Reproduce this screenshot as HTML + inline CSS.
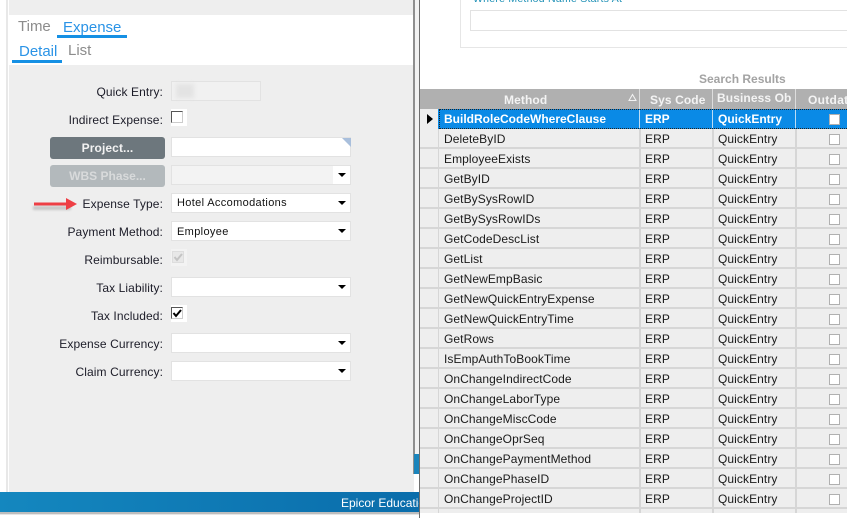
<!DOCTYPE html>
<html><head><meta charset="utf-8">
<style>
html,body{margin:0;padding:0;background:#fff}
#p{position:relative;width:847px;height:518px;overflow:hidden;background:#fff;font-family:"Liberation Sans",sans-serif;font-size:12px;color:#1a1a1a}
#p div{position:absolute;box-sizing:border-box}
.l{right:684px;text-align:right;white-space:nowrap;font-size:12px;line-height:14px;letter-spacing:.1px;color:#1c1c28;margin-top:1px}
.f{left:171px;width:180px;height:20px;background:#fff;border:1px solid #e2e2e2}
.f .a{right:4px;top:7px;width:0;height:0;border-left:4px solid transparent;border-right:4px solid transparent;border-top:4px solid #000}
.v{left:5px;top:2px;font-size:11px;line-height:14px;letter-spacing:.35px;color:#111;white-space:nowrap}
.hc{top:89px;height:20px;color:#f4f4f4;font-weight:bold;font-size:12px;line-height:20px;white-space:nowrap;letter-spacing:.1px}
.r{left:420px;width:427px;height:20px;background:#eee;border-bottom:2px solid #d6d6d6;line-height:19px;font-size:12px;white-space:nowrap;color:#1a1a1a}
.r .t{top:1px;white-space:nowrap;letter-spacing:.08px}
.r .cb{left:409px;top:5px;width:11px;height:11px;background:#fff;border:1px solid #b0b0b0}
.r .s{top:0;width:2px;height:20px;background:#d6d6d6}
.r .s0{left:18px;width:1px;background:#d6d6d6}
</style></head><body><div id="p">

<!-- left window -->
<div style="left:6px;top:0;width:2px;height:492px;background:#e8e8e8"></div>
<div style="left:9px;top:0;width:405px;height:492px;background:#eee"></div>
<div style="left:9px;top:15px;width:405px;height:50px;background:#fff"></div>
<div style="left:18px;top:18px;font-size:15px;line-height:18px;color:#8c8c8c;white-space:nowrap">Time</div>
<div style="left:63px;top:19px;font-size:15px;line-height:18px;color:#2a93e6;white-space:nowrap">Expense</div>
<div style="left:57px;top:35px;width:70px;height:3px;background:#1590e4"></div>
<div style="left:19px;top:43px;font-size:15px;line-height:18px;color:#2a93e6;white-space:nowrap">Detail</div>
<div style="left:68px;top:42px;font-size:15px;line-height:18px;color:#8c8c8c;white-space:nowrap">List</div>
<div style="left:12px;top:60px;width:50px;height:3px;background:#1590e4"></div>

<div class="l" style="top:84px">Quick Entry:</div>
<div style="left:171px;top:81px;width:90px;height:20px;background:#f1f1f1;border:1px solid #e2e2e2"></div>
<div style="left:176px;top:84px;width:18px;height:14px;background:#e3e3e3;filter:blur(2px)"></div>

<div class="l" style="top:112px">Indirect Expense:</div>
<div style="left:171px;top:109px;width:16px;height:17px;background:#fff"></div>
<div style="left:171px;top:111px;width:12px;height:12px;background:#fff;border:1px solid #555;border-right-color:#ccc;border-bottom-color:#ccc"></div>

<div style="left:50px;top:137px;width:115px;height:22px;background:#6d777d;border-radius:3px;color:#f2f2f2;font-weight:bold;font-size:12px;line-height:23px;text-align:center;letter-spacing:.1px">Project...</div>
<div class="f" style="top:137px"></div>
<div style="left:342px;top:138px;width:0;height:0;border-top:9px solid #a9bfdc;border-left:9px solid transparent"></div>

<div style="left:50px;top:165px;width:115px;height:22px;background:#b3b9bc;border-radius:3px;color:#d8dadb;font-weight:bold;font-size:12px;line-height:23px;text-align:center">WBS Phase...</div>
<div class="f" style="top:165px;background:#f3f3f3"><div style="right:0;top:0;width:17px;height:18px;background:#fff"></div><div class="a"></div></div>

<svg style="position:absolute;left:30px;top:195px" width="50" height="20"><rect x="3" y="11" width="38" height="4" fill="#999" opacity=".45" style="filter:blur(1px)"/><path d="M4 7.5H36V3L47 9L36 15V10.5H4Z" fill="#ee3f45"/></svg>
<div class="l" style="top:196px">Expense Type:</div>
<div class="f" style="top:193px"><div class="v">Hotel Accomodations</div><div class="a"></div></div>
<div class="l" style="top:224px">Payment Method:</div>
<div class="f" style="top:221px"><div class="v" style="top:3px">Employee</div><div class="a"></div></div>

<div class="l" style="top:252px">Reimbursable:</div>
<div style="left:171px;top:249px;width:16px;height:17px;background:#f3f3f3"></div>
<div style="left:172px;top:251px;width:12px;height:12px;background:#e8e8e8;border:1px solid #ddd"></div>
<svg style="position:absolute;left:172px;top:251px" width="12" height="12"><path d="M2.5 6L5 9L10 3" fill="none" stroke="#c4c4c4" stroke-width="2"/></svg>

<div class="l" style="top:280px">Tax Liability:</div>
<div class="f" style="top:277px"><div class="a"></div></div>

<div class="l" style="top:308px">Tax Included:</div>
<div style="left:171px;top:305px;width:16px;height:17px;background:#fff"></div>
<div style="left:171px;top:307px;width:12px;height:12px;background:#fff;border:1px solid #555;border-right-color:#ccc;border-bottom-color:#ccc"></div>
<svg style="position:absolute;left:171px;top:307px" width="12" height="12"><path d="M2.5 6L5 9L10 3" fill="none" stroke="#000" stroke-width="2"/></svg>

<div class="l" style="top:336px">Expense Currency:</div>
<div class="f" style="top:333px"><div class="a"></div></div>
<div class="l" style="top:364px">Claim Currency:</div>
<div class="f" style="top:361px"><div class="a"></div></div>

<!-- blue status bar -->
<div style="left:0;top:492px;width:420px;height:20px;background:linear-gradient(90deg,#1487bf,#0a6dab);color:#fff;font-size:12px;line-height:20px;overflow:hidden"><div style="left:341px;top:1px;white-space:nowrap">Epicor Education</div></div>
<div style="left:0;top:512px;width:420px;height:2px;background:#bdbdbd"></div>
<div style="left:0;top:514px;width:420px;height:1px;background:#e6e6e6"></div>

<!-- middle window edge -->
<div style="left:413px;top:0;width:2px;height:474px;background:#8f8f8f"></div>
<div style="left:415px;top:0;width:4px;height:474px;background:#f2f2f2"></div>
<div style="left:414px;top:454px;width:6px;height:20px;background:#1a84bb"></div>
<div style="left:419px;top:0;width:1px;height:518px;background:#6e6e6e"></div>

<!-- right window -->
<div style="left:460px;top:0;width:387px;height:48px;border:1px solid #e6e6e6;border-top:0;border-right:0"></div>
<div style="left:473px;top:-7px;font-size:10.5px;line-height:12px;color:#1c8fb5;white-space:nowrap;letter-spacing:.25px">Where Method Name Starts At</div>
<div style="left:470px;top:10px;width:377px;height:21px;border:1px solid #e2e2e2;border-right:0"></div>
<div style="left:699px;top:72px;font-size:12px;font-weight:bold;line-height:14px;color:#a3a3a3;white-space:nowrap">Search Results</div>

<div style="left:420px;top:89px;width:427px;height:20px;background:#b0b0b0"></div>
<div style="left:639px;top:89px;width:1px;height:20px;background:#ddd"></div>
<div style="left:712px;top:89px;width:1px;height:20px;background:#ddd"></div>
<div style="left:795px;top:89px;width:1px;height:20px;background:#ddd"></div>
<div class="hc" style="left:504px;top:90px">Method</div>
<svg style="position:absolute;left:628px;top:93px" width="10" height="9"><path d="M1 7.5H8L4.5 1.5Z" fill="none" stroke="#f4f4f4"/></svg>
<div class="hc" style="left:650px;top:90px">Sys Code</div>
<div class="hc" style="left:717px;top:88px">Business Ob</div>
<div class="hc" style="left:808px;top:90px;letter-spacing:.3px">Outdated</div>

<div class="r" style="top:109px;background:#0a8ae6;border-bottom:0"></div>
<div style="left:420px;top:109px;width:18px;height:20px;background:#eee"></div>
<div style="left:427px;top:114px;width:0;height:0;border-left:6px solid #000;border-top:5px solid transparent;border-bottom:5px solid transparent"></div>
<div style="left:439px;top:109px;width:408px;height:20px;border-top:1px dotted #222;border-bottom:1px dotted #222;border-left:1px dotted #222"></div>
<div style="left:639px;top:110px;width:1px;height:18px;background:#bcdcf4"></div>
<div style="left:712px;top:110px;width:1px;height:18px;background:#bcdcf4"></div>
<div style="left:795px;top:110px;width:1px;height:18px;background:#bcdcf4"></div>
<div style="left:444px;top:112px;color:#fff;font-weight:bold;font-size:12px;line-height:14px;white-space:nowrap">BuildRoleCodeWhereClause</div>
<div style="left:645px;top:112px;color:#fff;font-weight:bold;font-size:12px;line-height:14px">ERP</div>
<div style="left:718px;top:112px;color:#fff;font-weight:bold;font-size:12px;line-height:14px">QuickEntry</div>
<div style="left:829px;top:114px;width:11px;height:11px;background:#fff;border:1px solid #b0b0b0"></div>
<div style="left:420px;top:129px;width:427px;height:2px;background:#d6d6d6"></div>

<div class="r" style="top:129px"><div class="s s0"></div><div class="s" style="left:219px"></div><div class="s" style="left:292px"></div><div class="s" style="left:375px"></div><div class="t" style="left:24px">DeleteByID</div><div class="t" style="left:225px">ERP</div><div class="t" style="left:298px">QuickEntry</div><div class="cb"></div></div>
<div class="r" style="top:149px"><div class="s s0"></div><div class="s" style="left:219px"></div><div class="s" style="left:292px"></div><div class="s" style="left:375px"></div><div class="t" style="left:24px">EmployeeExists</div><div class="t" style="left:225px">ERP</div><div class="t" style="left:298px">QuickEntry</div><div class="cb"></div></div>
<div class="r" style="top:169px"><div class="s s0"></div><div class="s" style="left:219px"></div><div class="s" style="left:292px"></div><div class="s" style="left:375px"></div><div class="t" style="left:24px">GetByID</div><div class="t" style="left:225px">ERP</div><div class="t" style="left:298px">QuickEntry</div><div class="cb"></div></div>
<div class="r" style="top:189px"><div class="s s0"></div><div class="s" style="left:219px"></div><div class="s" style="left:292px"></div><div class="s" style="left:375px"></div><div class="t" style="left:24px">GetBySysRowID</div><div class="t" style="left:225px">ERP</div><div class="t" style="left:298px">QuickEntry</div><div class="cb"></div></div>
<div class="r" style="top:209px"><div class="s s0"></div><div class="s" style="left:219px"></div><div class="s" style="left:292px"></div><div class="s" style="left:375px"></div><div class="t" style="left:24px">GetBySysRowIDs</div><div class="t" style="left:225px">ERP</div><div class="t" style="left:298px">QuickEntry</div><div class="cb"></div></div>
<div class="r" style="top:229px"><div class="s s0"></div><div class="s" style="left:219px"></div><div class="s" style="left:292px"></div><div class="s" style="left:375px"></div><div class="t" style="left:24px">GetCodeDescList</div><div class="t" style="left:225px">ERP</div><div class="t" style="left:298px">QuickEntry</div><div class="cb"></div></div>
<div class="r" style="top:249px"><div class="s s0"></div><div class="s" style="left:219px"></div><div class="s" style="left:292px"></div><div class="s" style="left:375px"></div><div class="t" style="left:24px">GetList</div><div class="t" style="left:225px">ERP</div><div class="t" style="left:298px">QuickEntry</div><div class="cb"></div></div>
<div class="r" style="top:269px"><div class="s s0"></div><div class="s" style="left:219px"></div><div class="s" style="left:292px"></div><div class="s" style="left:375px"></div><div class="t" style="left:24px">GetNewEmpBasic</div><div class="t" style="left:225px">ERP</div><div class="t" style="left:298px">QuickEntry</div><div class="cb"></div></div>
<div class="r" style="top:289px"><div class="s s0"></div><div class="s" style="left:219px"></div><div class="s" style="left:292px"></div><div class="s" style="left:375px"></div><div class="t" style="left:24px">GetNewQuickEntryExpense</div><div class="t" style="left:225px">ERP</div><div class="t" style="left:298px">QuickEntry</div><div class="cb"></div></div>
<div class="r" style="top:309px"><div class="s s0"></div><div class="s" style="left:219px"></div><div class="s" style="left:292px"></div><div class="s" style="left:375px"></div><div class="t" style="left:24px">GetNewQuickEntryTime</div><div class="t" style="left:225px">ERP</div><div class="t" style="left:298px">QuickEntry</div><div class="cb"></div></div>
<div class="r" style="top:329px"><div class="s s0"></div><div class="s" style="left:219px"></div><div class="s" style="left:292px"></div><div class="s" style="left:375px"></div><div class="t" style="left:24px">GetRows</div><div class="t" style="left:225px">ERP</div><div class="t" style="left:298px">QuickEntry</div><div class="cb"></div></div>
<div class="r" style="top:349px"><div class="s s0"></div><div class="s" style="left:219px"></div><div class="s" style="left:292px"></div><div class="s" style="left:375px"></div><div class="t" style="left:24px">IsEmpAuthToBookTime</div><div class="t" style="left:225px">ERP</div><div class="t" style="left:298px">QuickEntry</div><div class="cb"></div></div>
<div class="r" style="top:369px"><div class="s s0"></div><div class="s" style="left:219px"></div><div class="s" style="left:292px"></div><div class="s" style="left:375px"></div><div class="t" style="left:24px">OnChangeIndirectCode</div><div class="t" style="left:225px">ERP</div><div class="t" style="left:298px">QuickEntry</div><div class="cb"></div></div>
<div class="r" style="top:389px"><div class="s s0"></div><div class="s" style="left:219px"></div><div class="s" style="left:292px"></div><div class="s" style="left:375px"></div><div class="t" style="left:24px">OnChangeLaborType</div><div class="t" style="left:225px">ERP</div><div class="t" style="left:298px">QuickEntry</div><div class="cb"></div></div>
<div class="r" style="top:409px"><div class="s s0"></div><div class="s" style="left:219px"></div><div class="s" style="left:292px"></div><div class="s" style="left:375px"></div><div class="t" style="left:24px">OnChangeMiscCode</div><div class="t" style="left:225px">ERP</div><div class="t" style="left:298px">QuickEntry</div><div class="cb"></div></div>
<div class="r" style="top:429px"><div class="s s0"></div><div class="s" style="left:219px"></div><div class="s" style="left:292px"></div><div class="s" style="left:375px"></div><div class="t" style="left:24px">OnChangeOprSeq</div><div class="t" style="left:225px">ERP</div><div class="t" style="left:298px">QuickEntry</div><div class="cb"></div></div>
<div class="r" style="top:449px"><div class="s s0"></div><div class="s" style="left:219px"></div><div class="s" style="left:292px"></div><div class="s" style="left:375px"></div><div class="t" style="left:24px">OnChangePaymentMethod</div><div class="t" style="left:225px">ERP</div><div class="t" style="left:298px">QuickEntry</div><div class="cb"></div></div>
<div class="r" style="top:469px"><div class="s s0"></div><div class="s" style="left:219px"></div><div class="s" style="left:292px"></div><div class="s" style="left:375px"></div><div class="t" style="left:24px">OnChangePhaseID</div><div class="t" style="left:225px">ERP</div><div class="t" style="left:298px">QuickEntry</div><div class="cb"></div></div>
<div class="r" style="top:489px"><div class="s s0"></div><div class="s" style="left:219px"></div><div class="s" style="left:292px"></div><div class="s" style="left:375px"></div><div class="t" style="left:24px">OnChangeProjectID</div><div class="t" style="left:225px">ERP</div><div class="t" style="left:298px">QuickEntry</div><div class="cb"></div></div>
<div class="r" style="top:509px;height:4px;border:0"><div class="s s0" style="height:4px"></div><div class="s" style="left:219px;height:4px"></div><div class="s" style="left:292px;height:4px"></div><div class="s" style="left:375px;height:4px"></div></div>

</div></body></html>
